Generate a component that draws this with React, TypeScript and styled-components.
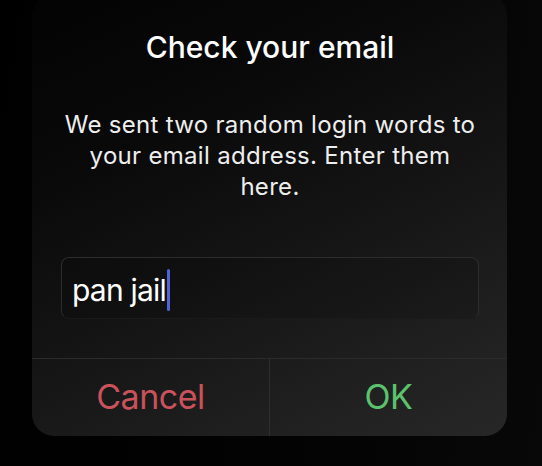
import React from "react";
import styled, { createGlobalStyle } from "styled-components";

const Global = createGlobalStyle`
  html, body {
    margin: 0;
    padding: 0;
    background: #050505;
    height: 100%;
    overflow: hidden;
  }
  body {
    font-family: Inter, "Noto Sans", "Liberation Sans", sans-serif;
    -webkit-font-smoothing: antialiased;
  }
`;

const Page = styled.div`
  width: 542px;
  height: 466px;
  background: linear-gradient(100deg, #000 0%, #030303 60%, #080808 100%);
  overflow: hidden;
`;

const Dialog = styled.div`
  margin: -6px 0 0 32px;
  width: 475px;
  height: 442px;
  box-sizing: border-box;
  border-radius: 22px;
  background: linear-gradient(155deg, #030303 0%, #090909 28%, #151515 58%, #1f1f1f 80%, #272727 100%);
  display: flex;
  flex-direction: column;
  overflow: hidden;
`;

const Body = styled.div`
  flex: 1;
  display: flex;
  flex-direction: column;
  align-items: center;
  padding: 35px 28px 0 29px;
`;

const Title = styled.h1`
  margin: 0;
  font-size: 30px;
  line-height: 36px;
  font-weight: 500;
  color: #ffffff;
  letter-spacing: 0;
`;

const Message = styled.p`
  margin: 44px 0 0;
  font-size: 24px;
  line-height: 31px;
  font-weight: 400;
  color: #eeeeee;
  text-align: center;
  letter-spacing: 0.3px;
`;

const Field = styled.div`
  margin-top: 55px;
  align-self: stretch;
  height: 62px;
  box-sizing: border-box;
  border: 1px solid #2c2c2c;
  border-bottom-color: #1a1a1a;
  border-radius: 8px;
  background: rgba(0, 0, 0, 0.12);
  display: flex;
  align-items: center;
  padding: 3px 0 0 10px;
`;

const FieldText = styled.span`
  font-size: 30px;
  line-height: 40px;
  color: #ffffff;
  letter-spacing: -0.8px;
`;

const Caret = styled.span`
  display: inline-block;
  width: 3px;
  height: 42px;
  margin-left: 1px;
  border-radius: 2px;
  background: #4f63dc;
`;

const Actions = styled.div`
  height: 77px;
  border-top: 1px solid #2b2b2b;
  display: grid;
  grid-template-columns: 1fr 1px 1fr;
`;

const Separator = styled.div`
  background: #2f2f2f;
`;

const ActionButton = styled.button<{ $tone: "cancel" | "ok" }>`
  border: 0;
  background: transparent;
  font-family: inherit;
  font-size: 34px;
  font-weight: 400;
  letter-spacing: -0.5px;
  color: ${(p) => (p.$tone === "cancel" ? "#c9525b" : "#5cc36c")};
  display: flex;
  align-items: center;
  justify-content: center;
  padding: 0 0 2px;
  cursor: pointer;
`;

export default function App() {
  return (
    <Page>
      <Global />
      <Dialog>
        <Body>
          <Title>Check your email</Title>
          <Message>
            We sent two random login words to
            <br />
            your email address. Enter them
            <br />
            here.
          </Message>
          <Field>
            <FieldText>pan jail</FieldText>
            <Caret />
          </Field>
        </Body>
        <Actions>
          <ActionButton $tone="cancel">Cancel</ActionButton>
          <Separator />
          <ActionButton $tone="ok">OK</ActionButton>
        </Actions>
      </Dialog>
    </Page>
  );
}
